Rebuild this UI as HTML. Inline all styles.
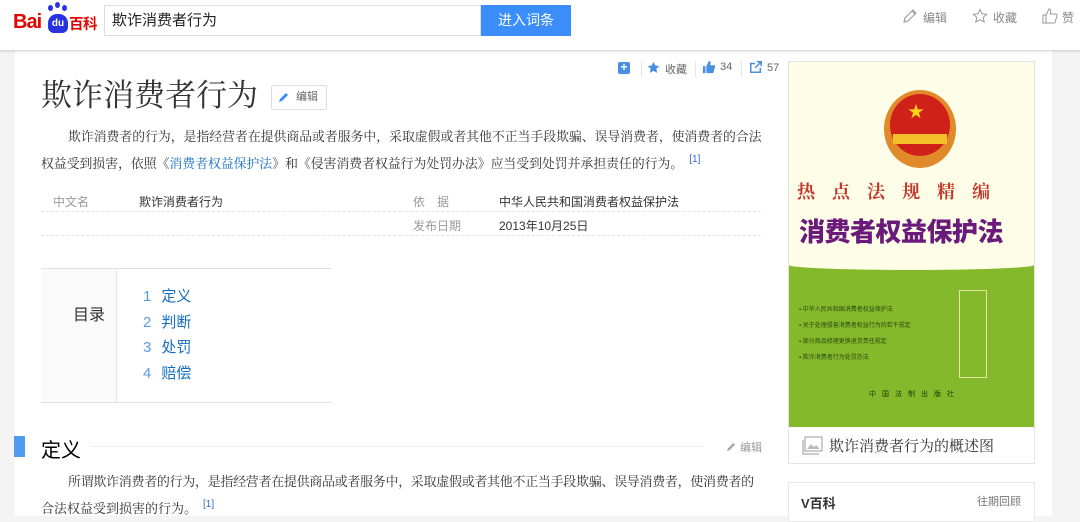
<!DOCTYPE html>
<html><head><meta charset="utf-8">
<style>
*{margin:0;padding:0;box-sizing:border-box}
body{width:1080px;height:516px;overflow:hidden;background:#f4f4f4;font-family:"Liberation Sans","Noto Sans CJK SC",sans-serif;position:relative;color:#333}
.abs{position:absolute}
.hdr{left:0;top:0;width:1080px;height:50px;background:#fff;box-shadow:0 1px 3px rgba(0,0,0,.2);z-index:2}
.main{left:15px;top:50px;width:1037px;height:466px;background:#fff}
.serif{font-family:"Liberation Serif","Noto Serif CJK SC",serif}
.ln{font-size:12.85px;line-height:24px;color:#333;white-space:nowrap;position:absolute}
.blue{color:#136ec2}
sup{font-size:10px;color:#3366cc;vertical-align:6px;margin-left:6px;font-family:"Liberation Sans",sans-serif}
.dot{border-bottom:1px dashed #e4e4e4}
.lab{font-size:12px;color:#999}
.val{font-size:12px;color:#333}
</style></head><body>
<div class="abs hdr">
  <div class="abs" style="left:13px;top:11px;font-size:20px;font-weight:bold;color:#e10601;letter-spacing:-1px">Bai</div>
  <div class="abs" style="left:48px;top:14px;width:20px;height:19px;background:#2932e1;border-radius:9px 9px 6px 6px;color:#fff;font-size:10px;font-weight:bold;text-align:center;line-height:20px">du</div>
  <div class="abs" style="left:48px;top:5px;width:5px;height:6px;background:#2932e1;border-radius:50%"></div>
  <div class="abs" style="left:55px;top:2px;width:5px;height:6px;background:#2932e1;border-radius:50%"></div>
  <div class="abs" style="left:62px;top:5px;width:5px;height:6px;background:#2932e1;border-radius:50%"></div>
  <div class="abs" style="left:69px;top:13px;font-size:14.5px;font-weight:bold;color:#e10601;letter-spacing:-0.5px">百科</div>
  <div class="abs" style="left:104px;top:5px;width:377px;height:31px;border:1px solid #ddd;font-size:15px;line-height:29px;padding-left:7px;color:#222">欺诈消费者行为</div>
  <div class="abs" style="left:481px;top:5px;width:90px;height:31px;background:#3b8dfa;color:#fff;font-size:14px;text-align:center;line-height:31px">进入词条</div>
  <svg class="abs" style="left:902px;top:8px" width="16" height="16" viewBox="0 0 16 16"><path d="M2 14l1-4 8-8 3 3-8 8z M10 3l3 3" fill="none" stroke="#999" stroke-width="1.1"/></svg>
  <div class="abs" style="left:923px;top:9px;font-size:12px;color:#888">编辑</div>
  <svg class="abs" style="left:972px;top:8px" width="16" height="16" viewBox="0 0 16 16"><path d="M8 1.5l2 4.3 4.6.5-3.4 3.1 1 4.6L8 11.6 3.8 14l1-4.6L1.4 6.3 6 5.8z" fill="none" stroke="#999" stroke-width="1"/></svg>
  <div class="abs" style="left:993px;top:9px;font-size:12px;color:#888">收藏</div>
  <svg class="abs" style="left:1042px;top:8px" width="16" height="16" viewBox="0 0 16 16"><path d="M1 7h3v8H1z M4 7l3-6c1.5 0 2 1 1.7 2.5L8.3 6H14c1 0 1.3.8 1 1.6L13 14.5c-.3.4-.6.5-1 .5H4" fill="none" stroke="#999" stroke-width="1"/></svg>
  <div class="abs" style="left:1062px;top:9px;font-size:12px;color:#888">赞</div>
</div>
<div class="abs main"></div>

<div class="abs" style="left:618px;top:62px;width:12px;height:12px;background:#4a90e2;border-radius:2px;color:#fff;font-size:12px;line-height:11px;text-align:center;font-weight:bold">+</div>
<div class="abs" style="left:641px;top:61px;width:1px;height:16px;background:#e5e5e5"></div>
<svg class="abs" style="left:647px;top:61px" width="13" height="13" viewBox="0 0 16 16"><path d="M8 1l2.2 4.6 5 .6-3.7 3.4 1 5L8 12.1 3.5 14.6l1-5L.8 6.2l5-.6z" fill="#4a90e2"/></svg>
<div class="abs" style="left:665px;top:61px;font-size:11px;color:#666">收藏</div>
<div class="abs" style="left:695px;top:61px;width:1px;height:16px;background:#e5e5e5"></div>
<svg class="abs" style="left:702px;top:60px" width="14" height="14" viewBox="0 0 16 16"><path d="M1 7h3v8H1z M5 7l3-6c1.5 0 2 1 1.7 2.5L9.3 6H14c1 0 1.3.8 1 1.6L13 14.5c-.3.4-.6.5-1 .5H5z" fill="#4a90e2"/></svg>
<div class="abs" style="left:720px;top:61px;font-size:11px;color:#666">34</div>
<div class="abs" style="left:741px;top:61px;width:1px;height:16px;background:#e5e5e5"></div>
<svg class="abs" style="left:749px;top:60px" width="14" height="14" viewBox="0 0 16 16"><path d="M13 9v5H2V4h5 M9 2h5v5 M14 2L7 9" fill="none" stroke="#4a90e2" stroke-width="1.8"/></svg>
<div class="abs" style="left:767px;top:62px;font-size:11px;color:#666">57</div>

<div class="abs serif" style="left:41px;top:77px;font-size:31px;color:#333;line-height:38px;white-space:nowrap">欺诈消费者行为</div>
<div class="abs" style="left:271px;top:85px;width:56px;height:25px;border:1px solid #ddd;border-radius:2px;font-size:11px;color:#666;line-height:23px;padding-left:24px">编辑</div>
<svg class="abs" style="left:278px;top:91px" width="12" height="12" viewBox="0 0 12 12"><path d="M1 11l1-3 6-6 2 2-6 6z" fill="#3b8dfa"/></svg>

<div class="ln serif" style="left:68px;top:125px">欺诈消费者的行为，是指经营者在提供商品或者服务中，采取虚假或者其他不正当手段欺骗、误导消费者，使消费者的合法</div>
<div class="ln serif" style="left:41px;top:148px">权益受到损害，依照《<span class="blue">消费者权益保护法</span>》和《侵害消费者权益行为处罚办法》应当受到处罚并承担责任的行为。<sup>[1]</sup></div>

<div class="abs dot" style="left:41px;top:188px;width:360px;height:24px"></div>
<div class="abs dot" style="left:41px;top:212px;width:360px;height:24px"></div>
<div class="abs dot" style="left:401px;top:188px;width:360px;height:24px"></div>
<div class="abs dot" style="left:401px;top:212px;width:360px;height:24px"></div>
<div class="abs lab" style="left:53px;top:193px">中文名</div>
<div class="abs val" style="left:139px;top:193px">欺诈消费者行为</div>
<div class="abs lab" style="left:413px;top:193px">依　据</div>
<div class="abs val" style="left:499px;top:193px">中华人民共和国消费者权益保护法</div>
<div class="abs lab" style="left:413px;top:217px">发布日期</div>
<div class="abs val" style="left:499px;top:217px">2013年10月25日</div>

<div class="abs" style="left:41px;top:268px;width:290px;height:135px;border-top:1px solid #e0e0e0;border-bottom:1px solid #e0e0e0"></div>
<div class="abs" style="left:41px;top:269px;width:76px;height:133px;background:#fafafa;border-right:1px solid #e8e8e8"></div>
<div class="abs" style="left:73px;top:301px;font-size:16px;color:#333">目录</div>
<div class="abs" style="left:143px;top:284px;font-size:15px;line-height:25.5px;color:#136ec2">
<div><span style="color:#5b9be6;margin-right:10px">1</span>定义</div>
<div><span style="color:#5b9be6;margin-right:10px">2</span>判断</div>
<div><span style="color:#5b9be6;margin-right:10px">3</span>处罚</div>
<div><span style="color:#5b9be6;margin-right:10px">4</span>赔偿</div>
</div>

<div class="abs" style="left:14px;top:436px;width:11px;height:21px;background:#4f9cee"></div>
<div class="abs" style="left:41px;top:434px;font-size:20px;color:#000">定义</div>
<div class="abs" style="left:90px;top:446px;width:614px;height:1px;background:#eee"></div>
<svg class="abs" style="left:726px;top:441px" width="11" height="11" viewBox="0 0 12 12"><path d="M1 11l1-3 6-6 2 2-6 6z" fill="#aaa"/></svg>
<div class="abs" style="left:740px;top:439px;font-size:11px;color:#999">编辑</div>
<div class="ln serif" style="left:68px;top:470px;font-size:13px;letter-spacing:-0.3px">所谓欺诈消费者的行为，是指经营者在提供商品或者服务中，采取虚假或者其他不正当手段欺骗、误导消费者，使消费者的</div>
<div class="ln serif" style="left:41px;top:493px;font-size:13px">合法权益受到损害的行为。<sup>[1]</sup></div>

<div class="abs" style="left:788px;top:61px;width:247px;height:403px;border:1px solid #e4e4e4;background:#fff"></div>
<div class="abs" style="left:789px;top:62px;width:245px;height:365px;background:#fefde8;overflow:hidden">
  <div class="abs" style="left:95px;top:28px;width:72px;height:78px;border-radius:50%;background:#e08a2a"></div>
  <div class="abs" style="left:101px;top:32px;width:60px;height:62px;border-radius:50%;background:#d0201a"></div>
  <div class="abs" style="left:104px;top:72px;width:54px;height:10px;background:#f3c12a"></div>
  <div class="abs" style="left:119px;top:36px;font-size:16px;color:#ffd11a">★</div>
  <div class="abs" style="left:8px;top:116px;width:230px;font-size:18px;color:#c0392b;font-weight:bold;letter-spacing:17px;font-family:'Noto Serif CJK SC',serif">热点法规精编</div>
  <div class="abs" style="left:10px;top:150px;width:235px;font-size:26px;color:#6a1a7a;font-weight:900;letter-spacing:-0.5px;font-family:'Noto Sans CJK SC',sans-serif">消费者权益保护法</div>
  <div class="abs" style="left:0;top:203px;width:245px;height:222px;background:#83b92a"></div>
  <div class="abs" style="left:0;top:198px;width:245px;height:10px;background:#fefde8;border-radius:0 0 50% 50%"></div>
  <div class="abs" style="left:170px;top:228px;width:28px;height:88px;border:1px solid #e6e6a0"></div>
  <div class="abs" style="left:10px;top:240px;font-size:6px;line-height:16px;color:#2d4a10">
    <div>▪ 中华人民共和国消费者权益保护法</div><div>▪ 关于处理侵害消费者权益行为的若干规定</div><div>▪ 部分商品修理更换退货责任规定</div><div>▪ 欺诈消费者行为处罚办法</div>
  </div>
  <div class="abs" style="left:80px;top:327px;font-size:7px;color:#233a0a;letter-spacing:6px">中国法制出版社</div>
</div>
<svg class="abs" style="left:802px;top:436px" width="21" height="19" viewBox="0 0 21 19"><rect x="3" y="1" width="17" height="14" fill="none" stroke="#999"/><path d="M1 4v14h16" fill="none" stroke="#999"/><path d="M5 13l4-5 3 3 2-2 4 4z" fill="#bbb"/></svg>
<div class="abs serif" style="left:829px;top:435px;font-size:15px;color:#333">欺诈消费者行为的概述图</div>

<div class="abs" style="left:788px;top:482px;width:247px;height:40px;border:1px solid #e8e8e8;background:#fff"></div>
<div class="abs" style="left:801px;top:493px;font-size:13px;font-weight:bold;color:#333">V百科</div>
<div class="abs" style="left:977px;top:493px;font-size:11px;color:#777">往期回顾</div>
</body></html>
